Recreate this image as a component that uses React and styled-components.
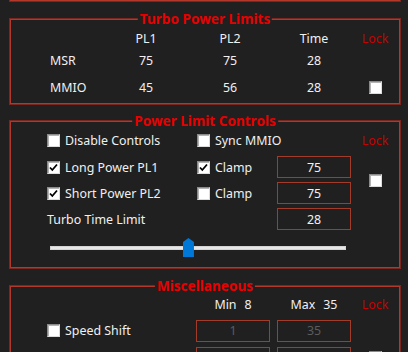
import React from "react";
import styled, { createGlobalStyle } from "styled-components";

const GlobalStyle = createGlobalStyle`
    html, body {
        margin:0;
        padding:0;
        overflow:hidden;
        background-color:#202020;
    }
    body {
        font-family: "Noto Sans", "Open Sans", sans-serif;
        font-size:12.4px;
        color:#f0f0f0;
    }
`

const Page = styled.div`
    width:392px;
    padding-left:9px;
`

const GroupEdge = styled.div`
    height:0;
    border:1px solid #7d2620;
    border-top:none;
    box-shadow: inset 0 0 0 1px #b3372b;
    padding-bottom:1px;
`

const Group = styled.div`
    position:relative;
    margin-top:${props => props.$gap}px;
    border:1px solid #7d2620;
    box-shadow: inset 0 0 0 1px #b3372b;
    padding:${props => props.$pad};
`

const Legend = styled.div`
    position:absolute;
    top:-9px;
    left:50%;
    transform:translateX(-50%);
    padding:0 2px;
    background-color:#202020;
    color:#e60000;
    font-weight:bold;
    font-size:13.6px;
    line-height:17px;
    white-space:nowrap;
`

const TurboGrid = styled.div`
    display:grid;
    grid-template-columns:56px 80px 88px 80px 42px;
    grid-template-rows:20px 24px 30px;
    align-items:center;
`

const ControlsGrid = styled.div`
    display:grid;
    grid-template-columns:150px 80px 74px 48px;
    grid-template-rows:27px 26px 26px 26px 32px;
    align-items:center;
`

const MiscGrid = styled.div`
    display:grid;
    grid-template-columns:149px 81px 74px 48px;
    grid-template-rows:26px 27px 27px;
    align-items:center;
`

const Cell = styled.div`
    text-align:${props => props.$align || "center"};
    grid-column:${props => props.$col || "auto"};
    grid-row:${props => props.$row || "auto"};
    white-space:nowrap;
`

const Lock = styled(Cell)`
    color:#c80000;
`

const Pair = styled.div`
    display:flex;
    justify-content:center;
    gap:8px;
    width:74px;
`

const Option = styled.label`
    display:flex;
    align-items:center;
    gap:5px;
    white-space:nowrap;
    grid-column:${props => props.$col || "auto"};
`

const Box = styled.span`
    display:inline-flex;
    align-items:center;
    justify-content:center;
    box-sizing:border-box;
    width:13px;
    height:13px;
    background-color:#ffffff;
    border:1px solid;
    border-color:#8a8a8a #dcdcdc #dcdcdc #8a8a8a;
    box-shadow: inset 1px 1px 0 #b4b4b4;
    flex-shrink:0;
    justify-self:center;
    grid-column:${props => props.$col || "auto"};
    grid-row:${props => props.$row || "auto"};
`

const Field = styled.div`
    box-sizing:border-box;
    width:74px;
    height:22px;
    border:1px solid #a33b2a;
    display:flex;
    align-items:center;
    justify-content:center;
    color:${props => props.$disabled ? "#5c5c5c" : "#f0f0f0"};
    grid-column:${props => props.$col || "auto"};
`

const SliderRow = styled.div`
    grid-column:1 / 4;
    padding:0 5px 0 3px;
`

const Track = styled.div`
    position:relative;
    height:4px;
    box-sizing:border-box;
    background-color:#e7e7e7;
    border:1px solid #d4d4d4;
`

const Thumb = styled.div`
    position:absolute;
    top:-9px;
    width:11px;
    height:19px;
    background-color:#0078d7;
    clip-path: polygon(50% 0, 100% 4px, 100% 100%, 0 100%, 0 4px);
`

const CheckBox = ({ checked, col, row }) => (
    <Box $col={col} $row={row}>
        {checked && (
            <svg width="9" height="9" viewBox="0 0 9 9">
                <path d="M1 4.5 L3.3 7 L8 1.5" stroke="#000" strokeWidth="1.8" fill="none" />
            </svg>
        )}
    </Box>
)

const Slider = ({ min, max, value }) => {
    const frac = (value - min) / (max - min);
    return (
        <SliderRow>
            <Track>
                <Thumb style={{ left: `calc((100% - 9px) * ${frac})` }} />
            </Track>
        </SliderRow>
    )
}

const App = () => {
    return (
        <Page>
            <GlobalStyle />
            <GroupEdge />

            <Group $gap={16} $pad="9px 0 2px 40px">
                <Legend>Turbo Power Limits</Legend>
                <TurboGrid>
                    <div />
                    <Cell>PL1</Cell>
                    <Cell>PL2</Cell>
                    <Cell>Time</Cell>
                    <Lock>Lock</Lock>

                    <Cell $align="left">MSR</Cell>
                    <Cell>75</Cell>
                    <Cell>75</Cell>
                    <Cell>28</Cell>
                    <div />

                    <Cell $align="left">MMIO</Cell>
                    <Cell>45</Cell>
                    <Cell>56</Cell>
                    <Cell>28</Cell>
                    <CheckBox />
                </TurboGrid>
            </Group>

            <Group $gap={15} $pad="6px 0 4px 37px">
                <Legend>Power Limit Controls</Legend>
                <ControlsGrid>
                    <Option><CheckBox />Disable Controls</Option>
                    <Option $col="2 / 4"><CheckBox />Sync MMIO</Option>
                    <Lock $col="4">Lock</Lock>

                    <Option><CheckBox checked />Long Power PL1</Option>
                    <Option><CheckBox checked />Clamp</Option>
                    <Field>75</Field>
                    <CheckBox col="4" row="2 / 4" />

                    <Option><CheckBox checked />Short Power PL2</Option>
                    <Option><CheckBox />Clamp</Option>
                    <Field>75</Field>

                    <Cell $align="left" $col="1 / 3">Turbo Time Limit</Cell>
                    <Field $col="3">28</Field>

                    <Slider min={0} max={100} value={46.3} />
                </ControlsGrid>
            </Group>

            <Group $gap={16} $pad="5px 0 0 37px">
                <Legend>Miscellaneous</Legend>
                <MiscGrid>
                    <div />
                    <Pair><span>Min</span><span>8</span></Pair>
                    <Pair><span>Max</span><span>35</span></Pair>
                    <Lock>Lock</Lock>

                    <Option><CheckBox />Speed Shift</Option>
                    <Field $disabled>1</Field>
                    <Field $disabled>35</Field>
                    <div />

                    <Cell $align="left">Power Limit 4</Cell>
                    <Field $disabled>0</Field>
                    <Field $disabled>0</Field>
                    <CheckBox />
                </MiscGrid>
            </Group>
        </Page>
    )
}

export default App;
